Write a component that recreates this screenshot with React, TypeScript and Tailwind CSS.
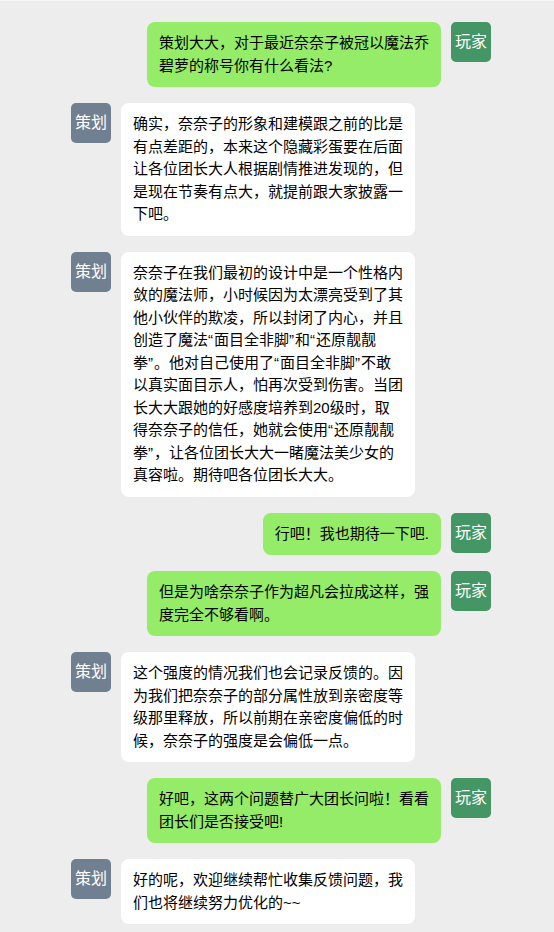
import React from 'react';

type Role = 'player' | 'planner';

interface Message {
  role: Role;
  text: string;
}

const messages: Message[] = [
  { role: 'player', text: '策划大大，对于最近奈奈子被冠以魔法乔碧萝的称号你有什么看法?' },
  {
    role: 'planner',
    text: '确实，奈奈子的形象和建模跟之前的比是有点差距的，本来这个隐藏彩蛋要在后面让各位团长大人根据剧情推进发现的，但是现在节奏有点大，就提前跟大家披露一下吧。',
  },
  {
    role: 'planner',
    text: '奈奈子在我们最初的设计中是一个性格内敛的魔法师，小时候因为太漂亮受到了其他小伙伴的欺凌，所以封闭了内心，并且创造了魔法“面目全非脚”和“还原靓靓拳”。他对自己使用了“面目全非脚”不敢以真实面目示人，怕再次受到伤害。当团长大大跟她的好感度培养到20级时，取得奈奈子的信任，她就会使用“还原靓靓拳”，让各位团长大大一睹魔法美少女的真容啦。期待吧各位团长大大。',
  },
  { role: 'player', text: '行吧！我也期待一下吧.' },
  { role: 'player', text: '但是为啥奈奈子作为超凡会拉成这样，强度完全不够看啊。' },
  {
    role: 'planner',
    text: '这个强度的情况我们也会记录反馈的。因为我们把奈奈子的部分属性放到亲密度等级那里释放，所以前期在亲密度偏低的时候，奈奈子的强度是会偏低一点。',
  },
  { role: 'player', text: '好吧，这两个问题替广大团长问啦！看看团长们是否接受吧!' },
  { role: 'planner', text: '好的呢，欢迎继续帮忙收集反馈问题，我们也将继续努力优化的~~' },
];

// curly quotes get a little extra room so they sit a bit wider than the Latin glyph
const renderText = (text: string) =>
  text.split(/([“”])/).map((part, i) =>
    part === '“' || part === '”' ? (
      <span key={i} className="tracking-[1px]">
        {part}
      </span>
    ) : (
      part
    )
  );

const Avatar: React.FC<{ role: Role }> = ({ role }) => (
  <div
    className={`flex h-10 w-10 shrink-0 items-center justify-center rounded-[5px] text-base text-white ${
      role === 'player' ? 'bg-[#449664]' : 'bg-[#708090]'
    }`}
  >
    {role === 'player' ? '玩家' : '策划'}
  </div>
);

const Bubble: React.FC<{ message: Message }> = ({ message }) => (
  <div
    className={`max-w-[294px] rounded-lg px-3 py-[10px] text-[15px] leading-[1.5] text-black ${
      message.role === 'player' ? 'bg-[#95ec69]' : 'bg-white'
    }`}
  >
    {renderText(message.text)}
  </div>
);

export default function App() {
  return (
    <div
      className="min-h-[932px] border-t border-[#f6f6f6] bg-[#ededed] pt-[21px] pb-2 pl-[71px] pr-[63px]"
      style={{ fontFamily: '"Liberation Sans", "Noto Sans CJK SC", sans-serif' }}
    >
      <div className="flex flex-col gap-4">
        {messages.map((m, i) =>
          m.role === 'player' ? (
            <div key={i} className="flex items-start justify-end gap-[10px]">
              <Bubble message={m} />
              <Avatar role={m.role} />
            </div>
          ) : (
            <div key={i} className="flex items-start gap-[10px]">
              <Avatar role={m.role} />
              <Bubble message={m} />
            </div>
          )
        )}
      </div>
    </div>
  );
}
